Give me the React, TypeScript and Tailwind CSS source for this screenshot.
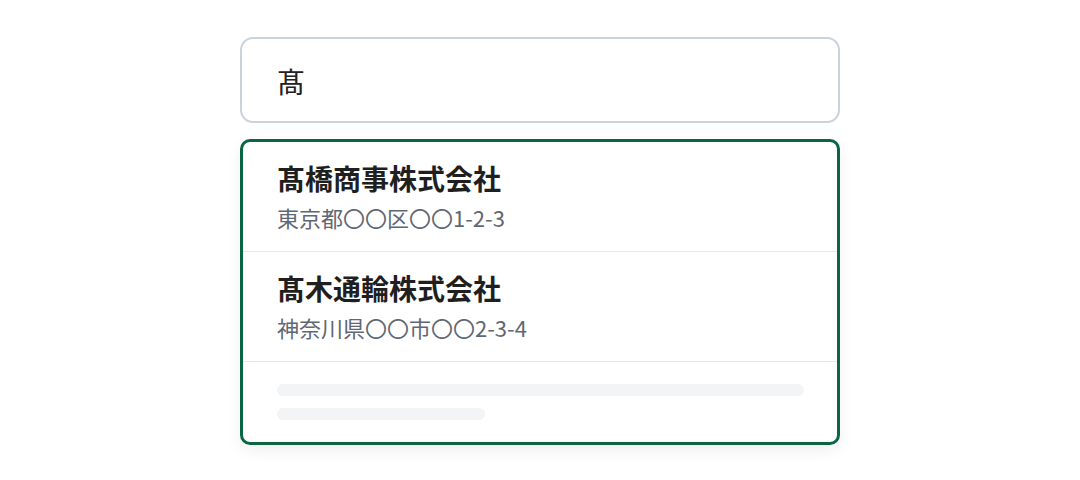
import React from "react";

const items = [
  { name: "髙橋商事株式会社", addr: "東京都〇〇区〇〇1-2-3" },
  { name: "髙木通輪株式会社", addr: "神奈川県〇〇市〇〇2-3-4" },
];

export default function App() {
  return (
    <div
      className="w-[1080px] h-[480px] bg-white flex flex-col items-center pt-[37px]"
      style={{ fontFamily: '"Noto Sans CJK JP", "Noto Sans", sans-serif' }}
    >
      <div className="w-[600px] h-[86px] border-2 border-[#c9d3dc] rounded-[13px] flex items-center pl-[35px]">
        <span className="text-[28px] leading-[34px] text-[#222222] mt-[2px]">髙</span>
      </div>
      <div className="w-[600px] mt-[16px] border-[3px] border-[#0a6542] rounded-[10px] bg-white shadow-[0_6px_16px_rgba(0,0,0,0.06)] overflow-hidden">
        {items.map((it) => (
          <div key={it.name} className="h-[110px] border-b border-[#e5e7eb] pl-[34px] pt-[20px]">
            <div className="text-[28px] leading-[32px] font-bold text-[#1f1f1f]">{it.name}</div>
            <div className="mt-[9px] text-[22px] leading-[28px] text-[#5f6774]">{it.addr}</div>
          </div>
        ))}
        <div className="h-[80px] pl-[34px] pr-[33px] pt-[22px] flex flex-col gap-[12px]">
          <div className="h-[12px] w-full rounded-full bg-[#f3f4f6]" />
          <div className="h-[12px] w-[208px] rounded-full bg-[#f3f4f6]" />
        </div>
      </div>
    </div>
  );
}
